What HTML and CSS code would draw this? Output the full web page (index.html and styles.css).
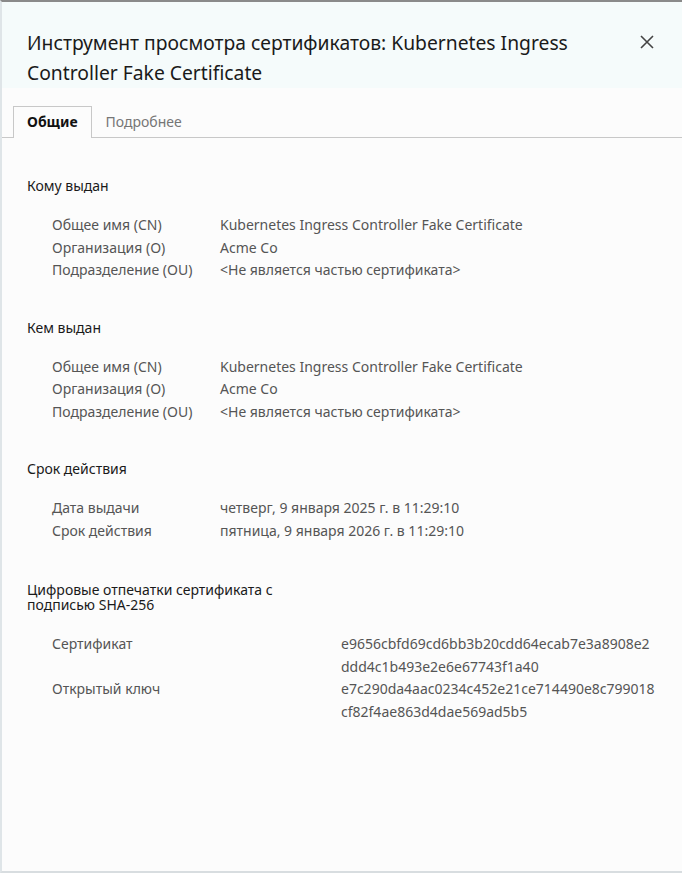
FILE: index.html
```html
<!DOCTYPE html>
<html lang="ru">
<head>
<meta charset="utf-8">
<link rel="stylesheet" href="styles.css">
</head>
<body>
<div class="dialog">
  <header class="header">
    <h1 class="title">Инструмент просмотра сертификатов: Kubernetes Ingress Controller Fake Certificate</h1>
    <button class="close" aria-label="Закрыть">
      <svg width="14" height="14" viewBox="0 0 14 14"><path d="M1 1L13 13M13 1L1 13" stroke="#444" stroke-width="1.6" fill="none"/></svg>
    </button>
  </header>
  <nav class="tabs">
    <div class="tab active">Общие</div>
    <div class="tab">Подробнее</div>
  </nav>
  <main class="content">
    <section class="section">
      <h2 class="heading">Кому выдан</h2>
      <div class="rows">
        <div class="label">Общее имя (CN)</div><div class="value">Kubernetes Ingress Controller Fake Certificate</div>
        <div class="label">Организация (O)</div><div class="value">Acme Co</div>
        <div class="label">Подразделение (OU)</div><div class="value">&lt;Не является частью сертификата&gt;</div>
      </div>
    </section>
    <section class="section">
      <h2 class="heading">Кем выдан</h2>
      <div class="rows">
        <div class="label">Общее имя (CN)</div><div class="value">Kubernetes Ingress Controller Fake Certificate</div>
        <div class="label">Организация (O)</div><div class="value">Acme Co</div>
        <div class="label">Подразделение (OU)</div><div class="value">&lt;Не является частью сертификата&gt;</div>
      </div>
    </section>
    <section class="section">
      <h2 class="heading">Срок действия</h2>
      <div class="rows">
        <div class="label">Дата выдачи</div><div class="value">четверг, 9 января 2025 г. в 11:29:10</div>
        <div class="label">Срок действия</div><div class="value">пятница, 9 января 2026 г. в 11:29:10</div>
      </div>
    </section>
    <section class="section fp">
      <h2 class="heading narrow">Цифровые отпечатки сертификата с подписью SHA-256</h2>
      <div class="rows wide">
        <div class="label">Сертификат</div><div class="value hash">e9656cbfd69cd6bb3b20cdd64ecab7e3a8908e2ddd4c1b493e2e6e67743f1a40</div>
        <div class="label">Открытый ключ</div><div class="value hash">e7c290da4aac0234c452e21ce714490e8c799018cf82f4ae863d4dae569ad5b5</div>
      </div>
    </section>
  </main>
</div>
</body>
</html>
```

FILE: styles.css
```css
html, body {
  margin: 0;
  padding: 0;
  height: 100%;
}
body {
  font-family: "Noto Sans", "Open Sans", sans-serif;
  background: #fcfcfc;
  color: #1b1b1b;
}
.dialog {
  box-sizing: border-box;
  height: 873px;
  border-top: 2px solid #8a8a8a;
  border-left: 2px solid #dfe5e8;
  border-bottom: 2px solid #d8dde0;
  background: #fcfcfc;
}
.header {
  display: flex;
  align-items: flex-start;
  justify-content: space-between;
  background: #f5fbfb;
  padding: 26px 28px 0 25px;
  height: 86px;
  box-sizing: border-box;
}
.title {
  margin: 0;
  font-size: 19.3px;
  font-weight: 400;
  line-height: 30px;
  width: 560px;
  color: #1a1a1a;
}
.close {
  border: 0;
  background: transparent;
  padding: 0;
  margin-top: 7px;
  width: 14px;
  height: 14px;
  display: flex;
}
.tabs {
  display: flex;
  padding: 18px 0 0 11px;
  border-bottom: 1px solid #c8c8c8;
}
.tab {
  font-size: 14px;
  line-height: 20px;
  padding: 5px 13px 6px 13px;
  color: #767676;
  border: 1px solid transparent;
  border-bottom: 0;
  margin-bottom: -1px;
}
.tab.active {
  font-weight: 700;
  color: #111;
  border-color: #c8c8c8;
  background: #fcfcfc;
}
.content {
  padding: 38px 25px 0 25px;
}
.section {
  margin-bottom: 36px;
}
.section.fp {
  margin-top: 40px;
}
.heading {
  margin: 0 0 18px 0;
  font-size: 14px;
  font-weight: 400;
  line-height: 20px;
  color: #1a1a1a;
}
.heading.narrow {
  width: 270px;
  line-height: 15px;
  margin-bottom: 21px;
}
.rows {
  display: grid;
  grid-template-columns: 168px 1fr;
  padding-left: 25px;
  font-size: 14px;
  line-height: 22.5px;
  color: #555;
}
.rows.wide {
  grid-template-columns: 289px 315px;
}
.hash {
  word-break: break-all;
}
```
